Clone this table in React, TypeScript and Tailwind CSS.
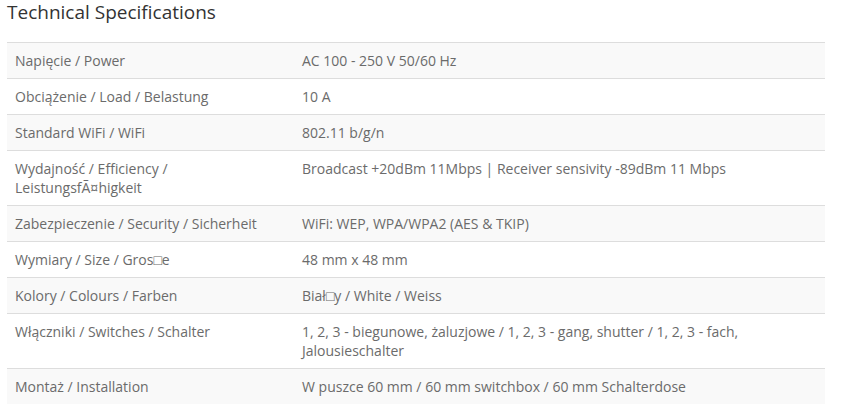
const ROWS: [string, string][] = [
  ['Napięcie / Power', 'AC 100 - 250 V 50/60 Hz'],
  ['Obciążenie / Load / Belastung', '10 A'],
  ['Standard WiFi / WiFi', '802.11 b/g/n'],
  ['Wydajność / Efficiency / LeistungsfÃ¤higkeit', 'Broadcast +20dBm 11Mbps | Receiver sensivity -89dBm 11 Mbps'],
  ['Zabezpieczenie / Security / Sicherheit', 'WiFi: WEP, WPA/WPA2 (AES & TKIP)'],
  ['Wymiary / Size / Gros\u25A1e', '48 mm x 48 mm'],
  ['Kolory / Colours / Farben', 'Biał\u25A1y / White / Weiss'],
  ['Włączniki / Switches / Schalter', '1, 2, 3 - biegunowe, żaluzjowe / 1, 2, 3 - gang, shutter / 1, 2, 3 - fach, Jalousieschalter'],
  ['Montaż / Installation', 'W puszce 60 mm / 60 mm switchbox / 60 mm Schalterdose'],
];

export default function App() {
  return (
    <div className="bg-white w-[842px] h-[419px] px-[7px] font-['Open_Sans',sans-serif]">
      <h2 className="text-[19px] leading-[24px] text-[#333] mb-[18px]">Technical Specifications</h2>
      <table className="w-[818px] border-collapse text-[14px] leading-[19px] text-[#6b6b6b]">
        <tbody>
          {ROWS.map(([label, value], i) => (
            <tr key={i} className={i % 2 === 0 ? 'bg-[#f9f9f9]' : 'bg-white'}>
              <td className="w-[287px] align-top border-t border-[#ddd] px-2 py-2">{label}</td>
              <td className="align-top border-t border-[#ddd] px-2 py-2">{value}</td>
            </tr>
          ))}
        </tbody>
      </table>
    </div>
  );
}
